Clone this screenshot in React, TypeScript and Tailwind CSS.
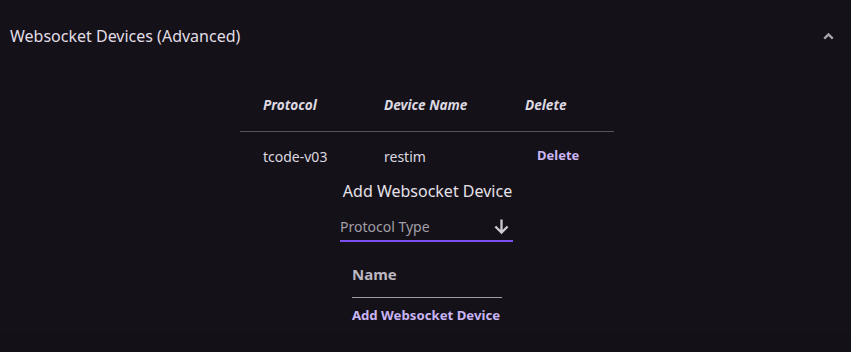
import React from "react";

export default function App() {
  const font = { fontFamily: '"Noto Sans", "Open Sans", sans-serif' };
  return (
    <div className="w-[851px] h-[352px] bg-[#131117] text-[#e6e0e9] overflow-hidden" style={font}>
      <div className="bg-[#141218] h-[331px]">
        <div className="flex items-center justify-between h-[72px] pl-[10px] pr-[14px]">
          <span className="text-[16px] text-[#e2dde6]">Websocket Devices (Advanced)</span>
          <svg width="17" height="17" viewBox="0 0 24 24" className="text-[#a9a4ae]">
            <path d="M6 15l6-6 6 6" stroke="currentColor" strokeWidth="3.2" fill="none" />
          </svg>
        </div>
        <div className="flex flex-col items-center">
          <div className="w-[374px] ml-[3px]">
            <div className="flex h-[60px] pt-[7px] items-center border-b border-[#57535c] pl-[23px] text-[13.6px] font-bold italic text-[#ddd8e1]">
              <span className="w-[121px]">Protocol</span>
              <span className="w-[141px]">Device Name</span>
              <span>Delete</span>
            </div>
            <div className="flex h-[48px] items-center pl-[23px] text-[14px] text-[#ddd8e1]">
              <span className="w-[121px]">tcode-v03</span>
              <span className="w-[153px]">restim</span>
              <span className="font-bold text-[13px] text-[#cbb6f4]">Delete</span>
            </div>
          </div>
          <div className="text-[16px] text-[#e6e0e9] -mt-[1px] ml-[4px]">Add Websocket Device</div>
          <div className="w-[173px] ml-[2px] mt-[13px] flex items-center justify-between border-b-2 border-[#7b4ff0] pb-[3px]">
            <span className="text-[14px] text-[#a39ea8]">Protocol Type</span>
            <svg width="21" height="21" viewBox="0 0 24 24" className="text-[#cfcad3] mr-[1px]">
              <path d="M12 4v15M5 12l7 7 7-7" stroke="currentColor" strokeWidth="2.6" fill="none" />
            </svg>
          </div>
          <div className="w-[150px] ml-[3px] mt-[21px] border-b border-[#a19ca6] pb-[11px] text-[15px] font-bold text-[#bcb7c1]">
            Name
          </div>
          <div className="ml-[1px] mt-[8px] text-[13.2px] font-bold text-[#c9b5f5]">Add Websocket Device</div>
        </div>
      </div>
    </div>
  );
}
